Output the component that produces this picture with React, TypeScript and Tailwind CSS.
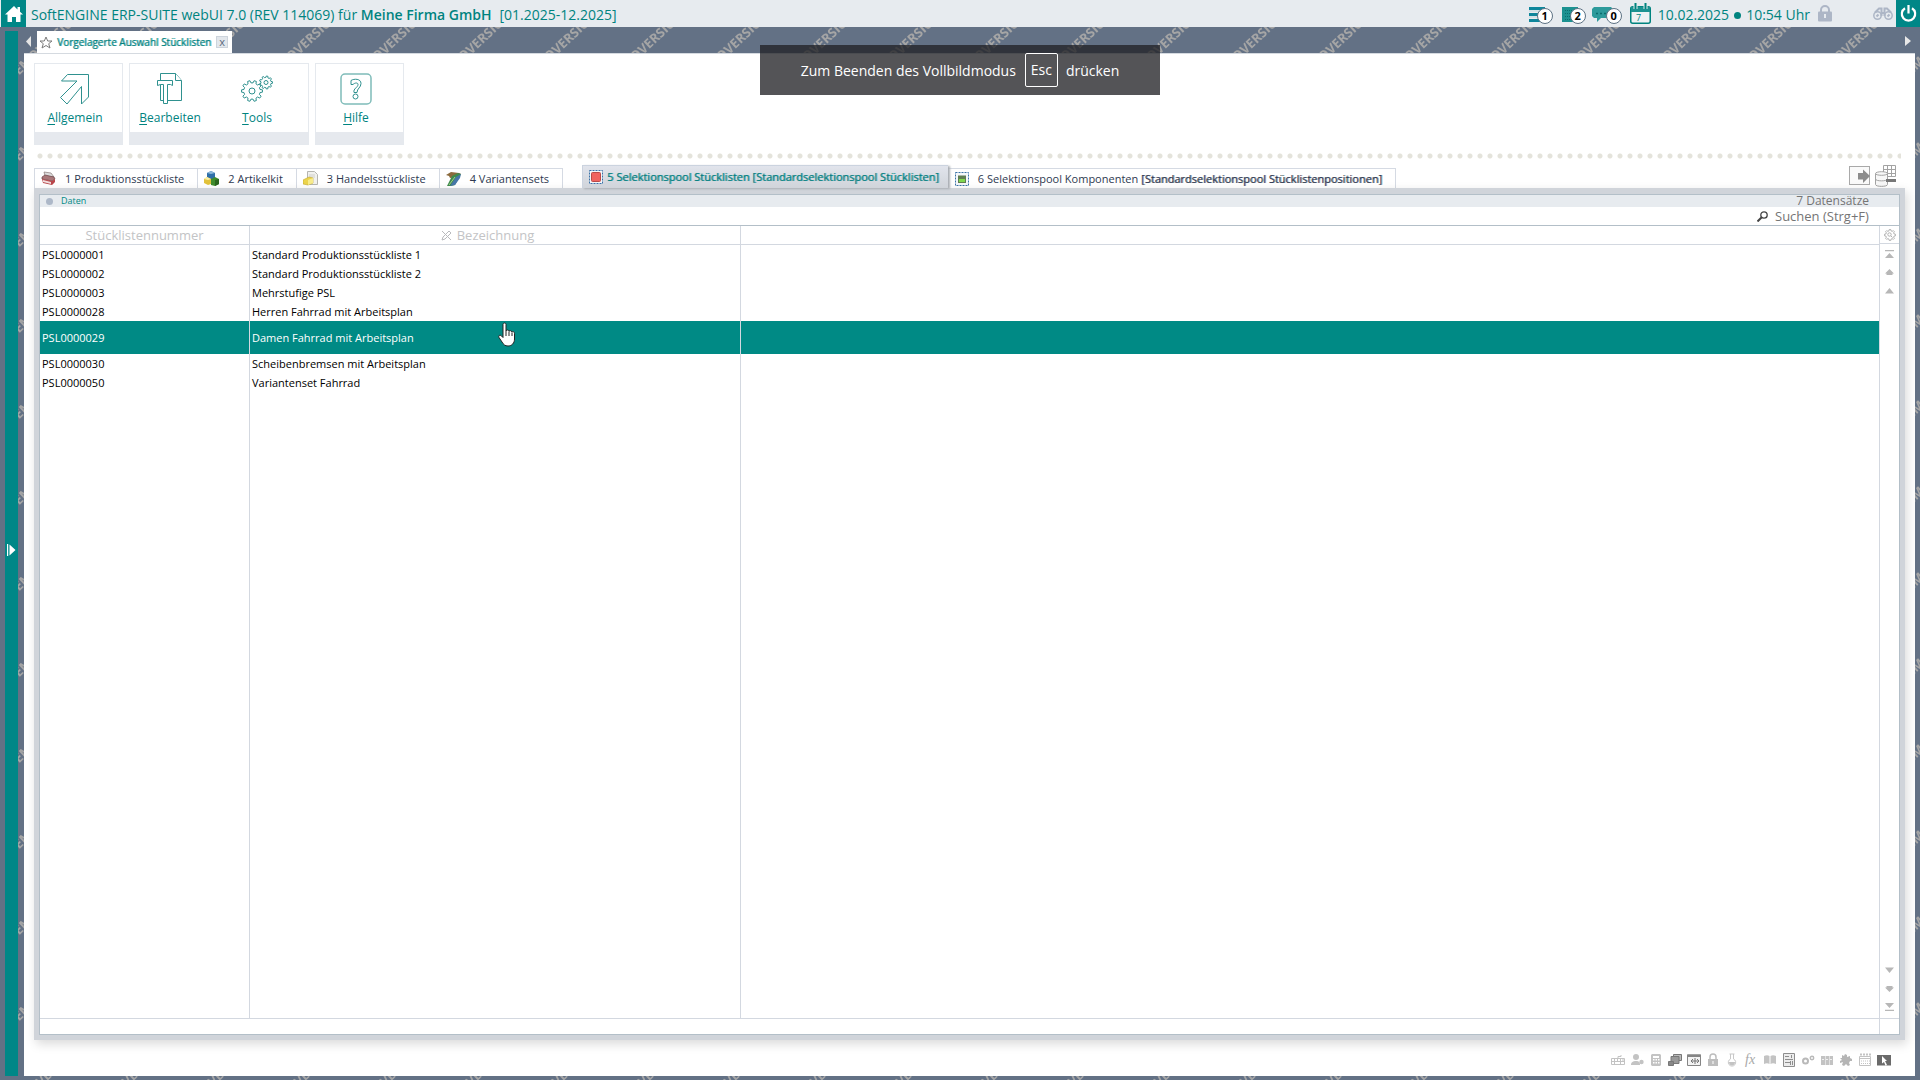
import type { ReactNode } from "react";
import clsx from "clsx";

interface Row {
	nummer: string;
	bezeichnung: string;
}

const rows: Row[] = [
	{ nummer: "PSL0000001", bezeichnung: "Standard Produktionsstückliste 1" },
	{ nummer: "PSL0000002", bezeichnung: "Standard Produktionsstückliste 2" },
	{ nummer: "PSL0000003", bezeichnung: "Mehrstufige PSL" },
	{ nummer: "PSL0000028", bezeichnung: "Herren Fahrrad mit Arbeitsplan" },
	{ nummer: "PSL0000029", bezeichnung: "Damen Fahrrad mit Arbeitsplan" },
	{ nummer: "PSL0000030", bezeichnung: "Scheibenbremsen mit Arbeitsplan" },
	{ nummer: "PSL0000050", bezeichnung: "Variantenset Fahrrad" },
];

const selected = "PSL0000029";

function Watermark() {
	return (
		<svg className="absolute inset-0 size-full" aria-hidden="true">
			<defs>
				<pattern id="demo" width="86" height="86" patternUnits="userSpaceOnUse">
					<text
						x="12"
						y="82"
						transform="rotate(-43 12 82)"
						fontSize="13"
						fontWeight="700"
						fill="#a5a5a5"
					>
						DEMOVERSION
					</text>
				</pattern>
			</defs>
			<rect width="100%" height="100%" fill="url(#demo)" />
		</svg>
	);
}

/* ---------- header ---------- */

function Counter({ value }: { value: number }) {
	return (
		<span className="absolute -right-2 top-[4px] size-4 rounded-full border border-[#5d7284] bg-white text-center text-[11px] font-bold leading-[14px] text-black">
			{value}
		</span>
	);
}

function Header() {
	return (
		<header className="flex h-[27px] shrink-0 items-center bg-[#e7ebef] text-[#00837f]">
			<button type="button" aria-label="Start" className="ml-px flex h-[27px] w-[25px] items-center justify-center bg-[#008787]">
				<svg width="18" height="16" viewBox="0 0 18 16" fill="#fff">
					<path d="M9 0 0 8.5h2.5V16H7v-5h4v5h4.500V8.500H18L15 5.700V1h-2.500v2.400z" />
				</svg>
			</button>
			<div className="ml-[5px] whitespace-pre pt-[2px] text-[14px] leading-[25px]">
				SoftENGINE ERP-SUITE webUI 7.0 (REV 114069) für <b className="font-semibold">Meine Firma GmbH</b>
				<span className="ml-[8px]">[01.2025-12.2025]</span>
			</div>
			<div className="ml-auto flex h-[27px] items-center">
				<button type="button" aria-label="Aufgaben" className="relative mr-[17px] h-5 w-4">
					<svg width="16" height="18" viewBox="0 0 16 18">
						<path d="M0 2h16v3H0zM0 8h13v3H0zM0 14h16v3H0z" fill="#0e869b" />
						<path d="M0 6h16M0 12h16" stroke="#bcd8de" />
					</svg>
					<Counter value={1} />
				</button>
				<button type="button" aria-label="Notizen" className="relative mr-[14px] h-5 w-4">
					<svg width="16" height="18" viewBox="0 0 16 18">
						<path d="M0 2h16v15H0z" fill="#1c9291" />
						<path d="M3 5.500h11M3 8.500h8M3 11.500h7M3 14.500h7" stroke="#0b6d6e" strokeDasharray="1 1" />
					</svg>
					<Counter value={2} />
				</button>
				<button type="button" aria-label="Nachrichten" className="relative mr-[16px] h-5 w-[22px]">
					<svg width="21" height="18" viewBox="0 0 21 18">
						<path d="M2 2h17l2 2v6l-2 3H9l-4 4v-4H2l-2-2V4z" fill="#2d9a9b" />
						<path d="M4 8.500h13" stroke="#0b6d6e" strokeWidth="1.500" strokeDasharray="2 2" />
					</svg>
					<Counter value={0} />
				</button>
				<button type="button" aria-label="Kalender" className="mr-[7px]">
					<svg width="21" height="21" viewBox="0 0 21 21">
						<rect x=".75" y="3.750" width="19.500" height="16.500" rx="2" fill="#eef2f4" stroke="#00837f" strokeWidth="1.500" />
						<path d="M1 4h19v5H1z" fill="#1c9291" />
						<path d="M5.500 0v6M15.500 0v6" stroke="#e7ebef" strokeWidth="4" />
						<path d="M5.500 0v6M15.500 0v6" stroke="#00837f" strokeWidth="2" />
						<text x="6" y="17.500" fontSize="9" fill="#00837f">7</text>
					</svg>
				</button>
				<span className="pt-[2px] text-[14px] leading-[25px]">10.02.2025</span>
				<span className="mx-[5px] mt-[3px] size-[7px] rounded-full bg-[#00837f]" />
				<span className="pt-[2px] text-[14px] leading-[25px]">10:54 Uhr</span>
				<button type="button" aria-label="Sperren" className="ml-[8px] mr-[41px]">
					<svg width="14" height="17" viewBox="0 0 14 17">
						<path d="M3 8V5a4 4 0 0 1 8 0v3" fill="none" stroke="#adb6c6" strokeWidth="2" />
						<rect y="6.500" width="14" height="10" rx="1" fill="#adb6c6" />
						<path d="M7 9v4" stroke="#e7ebef" strokeWidth="2" />
					</svg>
				</button>
				<button type="button" aria-label="Suchen" className="mr-[3px]">
					<svg width="20" height="14" viewBox="0 0 20 14" fill="none" stroke="#adb6c6" strokeWidth="1.500">
						<circle cx="4.500" cy="8.500" r="3.700" />
						<circle cx="15.500" cy="8.500" r="3.700" />
						<path d="M2 5.500 6 1.500h2.500V9M18 5.500l-4-4h-2.500V9M8 6h4M3.500 9.500l2-2M14.500 9.500l2-2" strokeWidth="2" />
					</svg>
				</button>
				<button type="button" aria-label="Abmelden" className="flex h-[27px] w-6 items-center justify-center bg-[#008787]">
					<svg width="17" height="17" viewBox="0 0 17 17" fill="none" stroke="#fff" strokeWidth="2.200">
						<path d="M5 3.200a6.700 6.700 0 1 0 7 0M8.500 0v8.500" />
					</svg>
				</button>
			</div>
		</header>
	);
}

/* ---------- toolbar ---------- */

function ArrowIcon() {
	return (
		<svg width="32" height="32" viewBox="0 0 32 32" fill="none" stroke="#2f918f">
			<path d="M8.500 1.500h21V24l-7 7V13.500L8 31l-6.500-6.500L18 8H2.500z" />
		</svg>
	);
}

function EditIcon() {
	return (
		<svg width="26" height="32" viewBox="0 0 26 32" fill="#fff" stroke="#2f918f">
			<path d="M3.500.5h15l6 7v20h-21z" />
			<path d="M18.500.5v7h6" />
			<path d="M.5 7.500h15v5l-2-1h-3v19h-4v-19h-3l-3 1z" />
		</svg>
	);
}

function gear(cx: number, cy: number, r: number, teeth: number) {
	const pts: string[] = [];
	for (let i = 0; i < teeth; i++) {
		[
			[-0.3, 0.78],
			[-0.18, 1],
			[0.18, 1],
			[0.3, 0.78],
		].forEach(([o, k]) => {
			const a = ((i + o) / teeth) * Math.PI * 2;
			pts.push(`${(cx + Math.cos(a) * r * k).toFixed(2)},${(cy + Math.sin(a) * r * k).toFixed(2)}`);
		});
	}
	return pts.join(" ");
}

function GearsIcon() {
	return (
		<svg width="32" height="32" viewBox="0 0 32 32" fill="none" stroke="#2f918f">
			<polygon points={gear(11, 18, 10.5, 10)} />
			<circle cx="11" cy="18" r="3" />
			<polygon points={gear(25, 9.5, 6.5, 9)} />
			<circle cx="25" cy="9.500" r="2" />
		</svg>
	);
}

function HelpIcon() {
	return (
		<svg width="32" height="32" viewBox="0 0 32 32" fill="none">
			<rect x="1" y="1" width="30" height="30" rx="4" stroke="#7fbcb9" strokeWidth="1.500" />
			<path
				d="M11 7.500c3-2 10-2 10 3 0 4-4 5-4 9h-3c-1-4 4-5 4-8 0-2-3-2-5 0h-2z"
				stroke="#2f918f"
			/>
			<circle cx="15.500" cy="23.500" r="2.500" stroke="#2f918f" />
		</svg>
	);
}

interface ToolProps {
	label: string;
	icon: ReactNode;
}

function Tool({ label, icon }: ToolProps) {
	return (
		<button type="button" className="flex w-20 flex-col items-center pt-[9px] text-[12px] text-[#00837f]">
			<span className="flex h-8 items-center">{icon}</span>
			<span className="mt-[4px] leading-[17px]">
				<span className="underline underline-offset-2">{label[0]}</span>
				{label.slice(1)}
			</span>
		</button>
	);
}

const toolGroups: { width: string; tools: ToolProps[] }[] = [
	{ width: "w-[89px]", tools: [{ label: "Allgemein", icon: <ArrowIcon /> }] },
	{
		width: "w-[180px]",
		tools: [
			{ label: "Bearbeiten", icon: <EditIcon /> },
			{ label: "Tools", icon: <GearsIcon /> },
		],
	},
	{ width: "w-[89px]", tools: [{ label: "Hilfe", icon: <HelpIcon /> }] },
];

function Toolbar() {
	return (
		<div className="flex gap-[6px] px-[10px] pt-[9px]">
			{toolGroups.map((group) => (
				<div key={group.tools[0].label} className={clsx("border border-[#e5e9ee] bg-white", group.width)}>
					<div className="flex h-[68px] gap-[7px]">
						{group.tools.map((tool) => (
							<Tool key={tool.label} {...tool} />
						))}
					</div>
					<div className="h-3 bg-[#e6e9ee]" />
				</div>
			))}
		</div>
	);
}

/* ---------- tabs ---------- */

function PrinterIcon() {
	return (
		<svg width="15" height="15" viewBox="0 0 15 15">
			<path d="m3 1 7 1 3 4-9-1z" fill="#dcdcdc" stroke="#8a7a78" strokeWidth=".7" />
			<path d="m1 6 3-2 9 2 1 2-3 2L1 8z" fill="#a9787a" stroke="#6c4446" strokeWidth=".7" />
			<path d="m1 8 10 2 3-2v3l-3 3L2 12z" fill="#b9464a" />
			<path d="m2 9 8 2v2l-8-2z" fill="#f0dede" />
		</svg>
	);
}

function CubesIcon() {
	return (
		<svg width="15" height="15" viewBox="0 0 15 15">
			<path d="m3 2 4-2 4 2v6H3z" fill="#2f6fa8" />
			<path d="m3 2 4-2 4 2-4 1z" fill="#8cb8dc" />
			<path d="m0 8 3-2 4 2v5l-3 1-4-2z" fill="#e2c23a" />
			<path d="m0 8 3-2 4 2-3 1z" fill="#fbf0a8" />
			<path d="m7 8 4-2 4 2v5l-4 2-4-1z" fill="#3f8c2d" />
			<path d="m11 9 4-1v5l-4 2z" fill="#2a651e" />
		</svg>
	);
}

function FolderIcon() {
	return (
		<svg width="15" height="15" viewBox="0 0 15 15">
			<path d="M4.500.5h7l3 3v10h-10z" fill="#f1f1ee" stroke="#b5b5b0" />
			<path d="M6 4h6M6 6h6" stroke="#cfcfca" />
			<path d="m0 9 4-2 2-1 4 1v5l-5 2-5-1z" fill="#ecd44c" stroke="#c3a72c" strokeWidth=".6" />
			<path d="m5 9 5-2v5l-5 2z" fill="#f8ec8c" />
		</svg>
	);
}

function BooksIcon() {
	return (
		<svg width="15" height="15" viewBox="0 0 15 15">
			<path d="m0 4 5-3 8 1 2 1-3 3-8 1-1-2z" fill="#8b6a3c" />
			<path d="m6 5 6-3 3 1-6 11-4 1H1z" fill="#3f8a4c" />
			<path d="m10 6 5-3-1 4-5 7-5 1z" fill="#4676a8" />
			<path d="m9 6-6 8" stroke="#9fd08a" />
		</svg>
	);
}

function PoolIcon({ active }: { active?: boolean }) {
	return (
		<svg width="14" height="14" viewBox="0 0 14 14">
			<rect x=".5" y=".5" width="13" height="13" fill="#f4f7fa" stroke="#3a72a8" strokeDasharray="2 1" />
			{active ? (
				<rect x="2.500" y="2.500" width="9" height="9" rx="1" fill="#f0635f" stroke="#b94a48" />
			) : (
				<g>
					<rect x="3" y="3.500" width="8" height="7.500" fill="#5f7d52" />
					<path d="M4 7h6v3H4z" fill="#7fd84e" />
				</g>
			)}
		</svg>
	);
}

interface TabInfo {
	label: string;
	icon: ReactNode;
}

const tabs: TabInfo[] = [
	{ label: "1 Produktionsstückliste", icon: <PrinterIcon /> },
	{ label: "2 Artikelkit", icon: <CubesIcon /> },
	{ label: "3 Handelsstückliste", icon: <FolderIcon /> },
	{ label: "4 Variantensets", icon: <BooksIcon /> },
];

function Tabs() {
	return (
		<div className="flex items-end text-[11px] leading-[15px] text-[#2e3950]" role="tablist">
			{tabs.map((tab, index) => (
				<button
					type="button"
					role="tab"
					key={tab.label}
					className={clsx(
						"flex h-5 items-center gap-[9px] border-r border-t border-[#d5dae3] bg-white pl-[6px] pr-[13px]",
						index === 0 && "border-l",
					)}
				>
					{tab.icon}
					{tab.label}
				</button>
			))}
			<button
				type="button"
				role="tab"
				aria-selected
				className="relative ml-[19px] flex h-[23px] items-center gap-[4px] border-l border-t border-[#cbd3df] bg-linear-to-b from-[#e1e4ec] to-[#d0d4da] pb-px pl-[6px] pr-[9px] text-[#008080] shadow-[2px_1px_2px_#a9adb3]"
			>
				<PoolIcon active />
				<span className="text-shadow-[1px_0_0_#00808099]">
					5 Selektionspool Stücklisten [Standardselektionspool Stücklisten]
				</span>
			</button>
			<button
				type="button"
				role="tab"
				className="flex h-5 items-center gap-[9px] border-r border-t border-[#d5dae3] bg-white pl-[7px] pr-[13px]"
			>
				<PoolIcon />
				<span>
					6 Selektionspool Komponenten{" "}
					<span className="text-shadow-[1px_0_0_#2e395099]">[Standardselektionspool Stücklistenpositionen]</span>
				</span>
			</button>
			<div className="ml-auto mr-[9px] flex h-[23px] items-start gap-[5px]">
				<button type="button" aria-label="Ansicht wechseln">
					<svg width="21" height="22" viewBox="0 0 21 22">
						<rect x=".5" y="1.500" width="20" height="18" fill="#fafafa" stroke="#a9a9a9" />
						<path d="M9 8h5V4.500l7 6.500-7 7v-3.500H9z" fill="#8c8c8c" />
					</svg>
				</button>
				<button type="button" aria-label="Datenbank">
					<svg width="21" height="22" viewBox="0 0 21 22" fill="none" stroke="#a3a3a3">
						<path d="M8.500.5h12v11h-12zM8.500 4.500h12M8.500 8.500h12M12.500.5v11M16.500.5v11" />
						<path d="M.5 8.500v11c0 2.500 12 2.500 12 0v-11" fill="#f7f7f7" />
						<ellipse cx="6.500" cy="8.500" rx="6" ry="1.800" fill="#f7f7f7" />
						<path d="M.5 14c0 2.500 12 2.500 12 0" />
						<path d="M11 15.500h10" stroke="#777" strokeWidth="3" />
					</svg>
				</button>
			</div>
		</div>
	);
}

/* ---------- data grid ---------- */

function ScrollButton({ label, d }: { label: string; d: string }) {
	return (
		<button type="button" aria-label={label} className="flex h-[18px] items-center justify-center">
			<svg width="9" height="9" viewBox="0 0 9 9" fill="#b7b7b7">
				<path d={d} />
			</svg>
		</button>
	);
}

function DataTable() {
	return (
		<table className="h-full w-full table-fixed border-separate border-spacing-0">
			<colgroup>
				<col className="w-[210px]" />
				<col className="w-[491px]" />
				<col />
			</colgroup>
			<thead>
				<tr className="h-[19px] text-[13px] leading-[17px] text-[#c3c4c6]">
					<th className="border-b border-r border-[#d3d8e0] p-0 font-normal">Stücklistennummer</th>
					<th className="border-b border-r border-[#d3d8e0] p-0 font-normal">
						<div className="flex items-center justify-center gap-[5px] pr-[15px]">
							<svg width="11" height="11" viewBox="0 0 11 11" fill="none" stroke="#b9babd">
								<path d="m1 1 9 9M1 10l1-3 6-6 2 2-6 6z" />
							</svg>
							Bezeichnung
						</div>
					</th>
					<th className="border-b border-[#d3d8e0] p-0" />
				</tr>
			</thead>
			<tbody className="text-[11px] leading-[15px] text-black">
				{rows.map((row) => (
					<tr
						key={row.nummer}
						className={row.nummer === selected ? "h-[33px] bg-[#008a85] text-white" : "h-[19px]"}
					>
						<td className="border-r border-[#d3d8e0] p-0 pl-[2px]">{row.nummer}</td>
						<td className="border-r border-[#d3d8e0] p-0 pl-[2px]">{row.bezeichnung}</td>
						<td className="p-0" />
					</tr>
				))}
				<tr className="h-full">
					<td className="border-r border-[#d3d8e0] p-0" />
					<td className="border-r border-[#d3d8e0] p-0" />
					<td className="p-0" />
				</tr>
			</tbody>
		</table>
	);
}

function DataPanel() {
	return (
		<section className="flex min-h-0 flex-1 flex-col border-5 border-t-6 border-[#d0d4da] shadow-[2px_4px_10px_#00000026]">
			<div className="flex min-h-0 flex-1 flex-col border border-[#b3bfc8] bg-white">
				<div className="flex h-3 shrink-0 items-center bg-[#e7ebef]">
					<span className="ml-[6px] size-[7px] rounded-full bg-[#adb8c8]" />
					<h2 className="ml-[8px] text-[9px] leading-3 text-[#008a85]">Daten</h2>
					<span className="ml-auto mr-[30px] text-[12px] leading-3 text-[#757575]">7 Datensätze</span>
				</div>
				<div className="flex h-[19px] shrink-0 items-center justify-end border-b border-[#b3bfc8] pr-[24px]">
					<label className="flex items-center gap-[7px]">
						<svg width="11" height="11" viewBox="0 0 11 11" fill="none" stroke="#444" strokeWidth="1.300">
							<circle cx="7" cy="4" r="3.200" />
							<path d="M4.500 6.500.5 10.500" strokeWidth="2" />
						</svg>
						<input
							type="text"
							aria-label="Suchen"
							placeholder="Suchen (Strg+F)"
							className="w-[100px] text-[13px] leading-[17px] outline-none placeholder:text-[#757575]"
						/>
					</label>
				</div>
				<div className="flex min-h-0 flex-1">
					<div className="min-w-0 flex-1">
						<DataTable />
					</div>
					<div className="flex w-5 shrink-0 flex-col border-l border-[#d3d8e0]">
						<button type="button" aria-label="Einstellungen" className="flex h-[18px] items-center justify-center border-b border-[#d3d8e0]">
							<svg width="12" height="12" viewBox="0 0 12 12" fill="none" stroke="#b0b0b0">
								<polygon points={gear(6, 6, 5.5, 8)} />
								<circle cx="5.500" cy="5.500" r="1.700" />
								<path d="m7 7 1.500 1.500" />
							</svg>
						</button>
						<div className="flex flex-col pt-px">
							<ScrollButton label="Zum Anfang" d="M0 0h9v1.200H0zM4.500 3 9 8H0z" />
							<ScrollButton label="Seite zurück" d="M4.500 1 9 5.500H7.500V7h-6V5.500H0z" />
							<ScrollButton label="Zeile zurück" d="M4.500 2 9 7.500H0z" />
						</div>
						<div className="mt-auto flex flex-col pb-[3px]">
							<ScrollButton label="Zeile vor" d="M4.500 7 9 1.500H0z" />
							<ScrollButton label="Seite vor" d="M4.500 8 9 3.500H7.500V2h-6v1.500H0z" />
							<ScrollButton label="Zum Ende" d="M0 9h9V7.800H0zM4.500 6 9 1H0z" />
						</div>
					</div>
				</div>
				<div className="flex h-4 shrink-0 border-t border-[#d3d8e0]">
					<div className="flex-1" />
					<div className="w-5 border-l border-[#d3d8e0]" />
				</div>
			</div>
		</section>
	);
}

/* ---------- footer ---------- */

const footerIcons: { label: string; icon: ReactNode }[] = [
	{
		label: "Tastatur",
		icon: (
			<g stroke="#c3c3c3">
				<path d="M.5 5.500h13v6H.5zM0 8.500h14M3.500 5v7M6.500 5v4M9.500 5v7M12 5v4M7 5V3.500h3V2" fill="none" />
			</g>
		),
	},
	{
		label: "Benutzer",
		icon: (
			<g>
				<circle cx="6" cy="4" r="3" />
				<path d="M1 12c0-3 2-4 5-4s4 1 4 4z" />
				<circle cx="11.500" cy="9" r="2.200" />
			</g>
		),
	},
	{
		label: "Rechner",
		icon: (
			<path
				fillRule="evenodd"
				d="M3 1h8l1 1v10l-1 1H3l-1-1V2zM4 3v2h6V3zM4 6v1.500h1.500V6zM6.500 6v1.500H8V6zM9 6v1.500h1.500V6zM4 9v1.500h1.500V9zM6.500 9v1.500H8V9zM9 9v1.500h1.500V9z"
			/>
		),
	},
	{
		label: "Fenster",
		icon: (
			<g stroke="#777">
				<path d="M5.500 1.500h8v6h-8z" fill="#bbb" />
				<path d="M3 3.500h8v7H3z" fill="#999" />
				<path d="M.5 8.500h5v4h-5z" fill="#888" />
			</g>
		),
	},
	{
		label: "Teilen",
		icon: (
			<g>
				<path d="M.5 2h13v10.500H.5z" fill="#f3f3f3" stroke="#858585" />
				<path d="M0 1.500h14V4H0z" fill="#858585" />
				<path d="M8 5v6M4 8h8M6 6 4 8l2 2M10 6l2 2-2 2" fill="none" stroke="#777" />
			</g>
		),
	},
	{
		label: "Schloss",
		icon: (
			<g>
				<path d="M4 6V4a3 3 0 0 1 6 0v2" fill="none" stroke="#bdbdbd" strokeWidth="1.500" />
				<path d="M2 6h10v7H2z" fill="#bdbdbd" />
				<path d="M7 8v3" stroke="#fff" />
			</g>
		),
	},
	{
		label: "Labor",
		icon: (
			<g>
				<path d="M5.500 1v5a3.700 3.700 0 1 0 3 0V1M4.500 1h5" fill="none" stroke="#c8c8c8" />
				<path d="M4 9h6c0 2-1 3.500-3 3.500S4 11 4 9z" />
			</g>
		),
	},
	{
		label: "Formel",
		icon: (
			<text x="1" y="11" fontSize="14" fontStyle="italic" className="font-['Liberation_Serif',serif]" fill="#a8a8a8">
				fx
			</text>
		),
	},
	{ label: "Handbuch", icon: <path d="M1 3c2-1 4-1 5.500 0v8C5 10 3 10 1 11zM7.500 3C9 2 11 2 13 3v8c-2-1-4-1-5.500 0z" /> },
	{
		label: "Formular",
		icon: (
			<g stroke="#8d8d8d" fill="#ececec">
				<path d="M1.500.5h11v13h-11z" />
				<path d="M3 3.500h4M3 6.500h8M3 9.500h5M9.500 2v3M8.500 8v4M10.500 8v4" />
			</g>
		),
	},
	{
		label: "Prozesse",
		icon: (
			<g fill="none" stroke="#b9b9b9">
				<circle cx="4.500" cy="8" r="2.500" strokeWidth="2" />
				<circle cx="11" cy="5" r="1.700" strokeWidth="1.500" />
			</g>
		),
	},
	{
		label: "Ordner",
		icon: <path fillRule="evenodd" d="M1 3h12v9H1zM5 3v9h.5V3zM9 3v9h.5V3zM2 6v.8h2V6zM6 6v.8h2V6zM10 6v.8h2V6z" />,
	},
	{
		label: "Erweiterungen",
		icon: <path d="m3 2 2 1 1-2 2 1v2l3-1v2l2 1v2h-2l-1 2 1 2-2 1-2-2-2 2-2-1 1-3-3 1V8l2-1-2-2 2 0z" fill="#b5b5b5" />,
	},
	{
		label: "Termine",
		icon: (
			<g stroke="#c3c3c3" fill="none">
				<path d="M1.500 3.500h11v9h-11zM1 5.500h12" />
				<path d="M3 8h9M3 10.500h9" strokeDasharray="1 1" />
				<path d="M2 1.500h11" strokeDasharray="2 1" strokeWidth="2" />
			</g>
		),
	},
	{
		label: "Auswahl",
		icon: (
			<g>
				<path d="M0 2h14v10.500H0z" fill="#6a6a6a" />
				<path d="m5 3 5 5H8l2 4-1.500.7L7 9l-2 1.500z" fill="#fff" />
			</g>
		),
	},
];

function Footer() {
	return (
		<footer className="flex h-[36px] shrink-0 items-center justify-end pr-[22px] pt-[4px]">
			{footerIcons.map((el) => (
				<button type="button" key={el.label} aria-label={el.label} className="flex w-[19px] justify-center">
					<svg width="14" height="14" viewBox="0 0 14 14" fill="#c3c3c3">
						{el.icon}
					</svg>
				</button>
			))}
		</footer>
	);
}

/* ---------- overlays ---------- */

function FullscreenHint() {
	return (
		<div className="absolute left-1/2 top-[45px] flex h-[50px] w-[400px] -translate-x-1/2 items-center justify-center bg-[#202124c4] text-[14px] leading-[33px] text-white">
			Zum Beenden des Vollbildmodus
			<kbd className="ml-[9px] mr-[8px] h-[34px] w-[33px] rounded-xs border border-white text-center font-['Open_Sans','Noto_Sans',sans-serif] text-[14px] leading-[31px]">
				Esc
			</kbd>
			drücken
		</div>
	);
}

function HandCursor() {
	return (
		<svg className="absolute left-[498px] top-[322px]" width="18" height="25" viewBox="0 0 18 25" aria-hidden="true">
			<path
				d="M5 2.500c0-2 3-2 3 0V9c.5-1.500 2.800-1.200 3 .3.600-1 2.600-.8 2.900.7.800-.8 2.600-.4 2.600 1.300V17c0 4-2.500 7-6.500 7-3 0-4.500-1.500-6-4L1 15.500c-1-2 1-3 2.300-1.700L5 15.500z"
				fill="#fff"
				stroke="#222"
			/>
			<path d="M8 9v5M11 9.500V14M14 10.500V14" stroke="#222" />
		</svg>
	);
}

export default function App() {
	return (
		<div className="relative isolate flex h-screen flex-col overflow-hidden bg-[#637185] font-['Open_Sans','Noto_Sans',sans-serif]">
			<div className="absolute inset-0 -z-10">
				<Watermark />
			</div>
			<Header />
			<div className="flex min-h-0 flex-1 pb-[4px]">
				<nav className="flex w-6 shrink-0 bg-linear-to-r from-[#637185] from-75% to-transparent to-75% pl-[5px] pt-[4px]">
					<button type="button" aria-label="Navigation öffnen" className="flex w-[13px] items-center justify-center bg-[#008787] pb-[8px]">
						<svg width="9" height="12" viewBox="0 0 9 12" fill="#fff">
							<path d="M0 0h1.200v12H0zM2.500.5 8.500 6l-6 5.500z" />
						</svg>
					</button>
				</nav>
				<div className="flex min-w-0 flex-1 flex-col">
					<div className="flex h-[26px] shrink-0 items-end">
						<button type="button" aria-label="Tabs zurück" className="mb-[6px] ml-[2px] mr-[6px]">
							<svg width="5" height="11" viewBox="0 0 5 11" fill="#e4e4e4">
								<path d="M5 0v11L0 5.500z" />
							</svg>
						</button>
						<div className="flex h-[22px] items-center bg-white pl-[2px] pr-[4px] text-[10px] text-[#00837f]">
							<svg className="mr-[4px]" width="14" height="13" viewBox="0 0 14 13" fill="none" stroke="#7b7b7b">
								<path d="m7 1 1.700 4h4.300L9.700 7.700 11 12 7 9.500 3 12l1.300-4.300L1 5h4.300z" />
							</svg>
							<span className="text-shadow-[1px_0_0_#00837f99]">Vorgelagerte Auswahl Stücklisten</span>
							<button
								type="button"
								aria-label="Tab schließen"
								className="ml-[5px] size-3 border border-[#cdd4dc] bg-[#e3e7ec] text-[11px] leading-[8px] text-[#5a6a7c]"
							>
								x
							</button>
						</div>
						<button type="button" aria-label="Tabs vor" className="mb-[7px] ml-auto mr-[9px]">
							<svg width="6" height="10" viewBox="0 0 6 10" fill="#e8e8e8">
								<path d="M0 0v10l6-5z" />
							</svg>
						</button>
					</div>
					<main className="mr-[5px] flex min-h-0 flex-1 flex-col border-t border-[#d5dae0] bg-white">
						<Toolbar />
						<div className="ml-[11px] mr-[14px] mt-[6px] h-[10px] shrink-0 bg-[radial-gradient(circle_at_center,#e4e3db_2px,transparent_3px)] bg-size-[10px_10px]" />
						<div className="flex min-h-0 flex-1 flex-col px-[10px] pt-[4px]">
							<Tabs />
							<DataPanel />
						</div>
						<Footer />
					</main>
				</div>
			</div>
			<FullscreenHint />
			<HandCursor />
		</div>
	);
}
